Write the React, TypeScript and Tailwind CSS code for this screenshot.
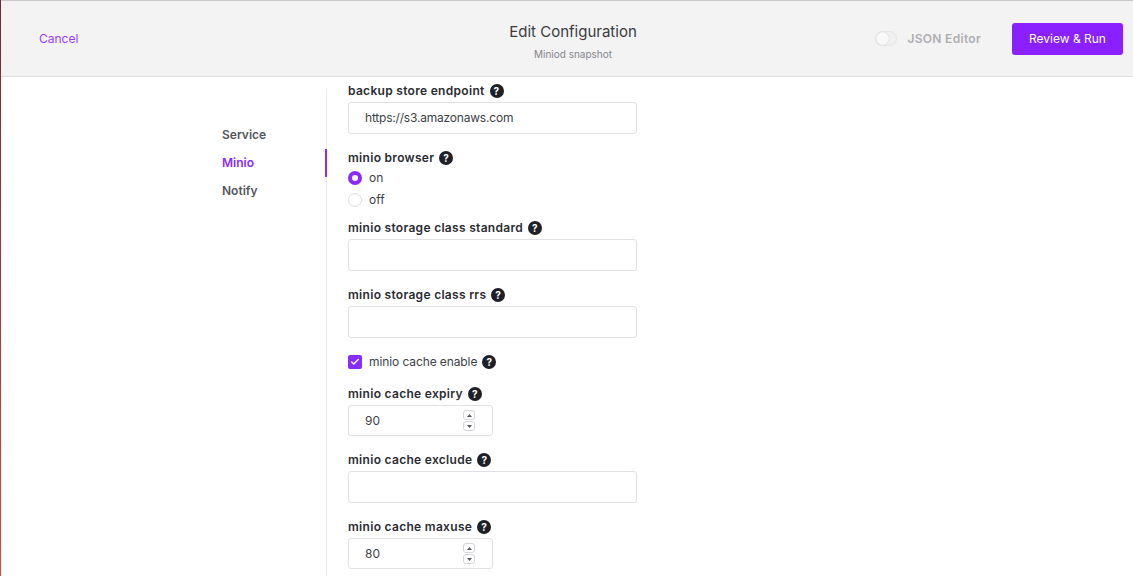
import { Check } from 'lucide-react';

const FONT = "font-['Inter','Noto_Sans',sans-serif]";

const HelpIcon = () => (
  <span className="ml-[5px] inline-flex h-[14px] w-[14px] shrink-0 items-center justify-center rounded-full bg-[#1f2027] text-[10px] font-bold leading-none text-white">
    ?
  </span>
);

const Label = ({ children }: { children: string }) => (
  <div className="flex h-[14px] items-center text-[12px] font-semibold leading-[14px] tracking-[0.3px] text-[#2b2c33]">
    {children}
    <HelpIcon />
  </div>
);

const TextField = ({ label, value = '' }: { label: string; value?: string }) => (
  <div className="flex flex-col gap-[4px]">
    <Label>{label}</Label>
    <div className="flex h-[32px] w-[289px] items-center rounded-[3px] border border-[#e0e0e6] bg-white px-4 text-[12px] tracking-[-0.2px] text-[#3e3f47]">
      {value}
    </div>
  </div>
);

const NumberField = ({ label, value }: { label: string; value: string }) => (
  <div className="flex flex-col gap-[4px]">
    <Label>{label}</Label>
    <div className="flex h-[31px] w-[145px] items-center justify-between rounded-[3px] border border-[#e0e0e6] bg-white pl-4 pr-[17px] text-[12px] text-[#3e3f47]">
      {value}
      <div className="flex flex-col gap-[1px]">
        <span className="flex h-[10px] w-[12px] items-center justify-center rounded-[3px] border border-[#d5d5da] text-[#55565e]">
          <svg width="5" height="3" viewBox="0 0 5 3">
            <path d="M2.5 0 5 3H0z" fill="currentColor" />
          </svg>
        </span>
        <span className="flex h-[10px] w-[12px] items-center justify-center rounded-[3px] border border-[#d5d5da] text-[#55565e]">
          <svg width="5" height="3" viewBox="0 0 5 3">
            <path d="M2.5 3 5 0H0z" fill="currentColor" />
          </svg>
        </span>
      </div>
    </div>
  </div>
);

const Radio = ({ label, checked }: { label: string; checked?: boolean }) => (
  <div className="flex h-[22px] items-center gap-[7px] text-[12px] text-[#3e3f47]">
    {checked ? (
      <span className="h-[14px] w-[14px] rounded-full border-[4px] border-[#8a2bff] bg-white" />
    ) : (
      <span className="h-[14px] w-[14px] rounded-full border border-[#dcdce2] bg-white" />
    )}
    {label}
  </div>
);

const App = () => {
  return (
    <div className={`flex h-screen w-full overflow-hidden bg-white ${FONT}`}>
      <div className="w-px shrink-0 bg-gradient-to-b from-[#6e2a38] to-[#c0544a]" />
      <div className="flex min-w-0 flex-1 flex-col">
        <header className="flex h-[77px] shrink-0 items-center border-y border-t-[#c9c9c9] border-b-[#dcdcdc] bg-[#f3f3f3]">
          <div className="w-[343px] pl-[38px] text-[12px] text-[#9b3dff]">Cancel</div>
          <div className="flex flex-1 flex-col items-center pt-[4px]">
            <div className="text-[15px] leading-[20px] text-[#3a3b42]">Edit Configuration</div>
            <div className="mt-[6px] text-[10px] leading-[12px] text-[#85868d]">Miniod snapshot</div>
          </div>
          <div className="flex w-[331px] items-center justify-end pr-[10px]">
            <span className="h-[15px] w-[22px] rounded-full border border-[#e6e6e6] bg-[#f0f0f0]">
              <span className="block h-[13px] w-[13px] rounded-full bg-[#f8f8f8] shadow-[0_0_1px_#bbb]" />
            </span>
            <span className="ml-[10px] text-[12px] font-semibold tracking-[0.3px] text-[#aeaeb2]">JSON Editor</span>
            <button className="ml-[31px] h-[32px] w-[111px] rounded-[3px] bg-[#8a1fff] text-[12px] text-white">
              Review &amp; Run
            </button>
          </div>
        </header>
        <div className="flex min-h-0 flex-1">
          <nav className="mt-[12px] w-[326px] shrink-0 border-r border-[#ececec] pl-[221px] pt-[32px] text-[12px] font-semibold">
            <div className="flex h-[28px] items-center text-[#55565e]">Service</div>
            <div className="relative flex h-[28px] items-center text-[#8a2bff]">
              Minio
              <span className="absolute right-[-1px] top-0 h-[28px] w-[2px] bg-[#8a2bff]" />
            </div>
            <div className="flex h-[28px] items-center text-[#55565e]">Notify</div>
          </nav>
          <main className="min-w-0 flex-1 overflow-hidden pl-[21px] pt-[7px]">
            <div className="flex flex-col gap-[17px]">
              <TextField label="backup store endpoint" value="https://s3.amazonaws.com" />
              <div className="-mb-[7px] flex flex-col">
                <Label>minio browser</Label>
                <div className="mt-[2px]">
                  <Radio label="on" checked />
                  <Radio label="off" />
                </div>
              </div>
              <TextField label="minio storage class standard" />
              <TextField label="minio storage class rrs" />
              <div className="flex h-[14px] items-center text-[12px] tracking-[-0.1px] text-[#3e3f47]">
                <span className="mr-[7px] flex h-[14px] w-[14px] items-center justify-center rounded-[2px] bg-[#8a2bff]">
                  <Check size={10} strokeWidth={3.5} className="text-white" />
                </span>
                minio cache enable
                <HelpIcon />
              </div>
              <div className="mt-[1px]">
                <NumberField label="minio cache expiry" value="90" />
              </div>
              <TextField label="minio cache exclude" />
              <NumberField label="minio cache maxuse" value="80" />
            </div>
          </main>
        </div>
      </div>
    </div>
  );
};

export default App;
